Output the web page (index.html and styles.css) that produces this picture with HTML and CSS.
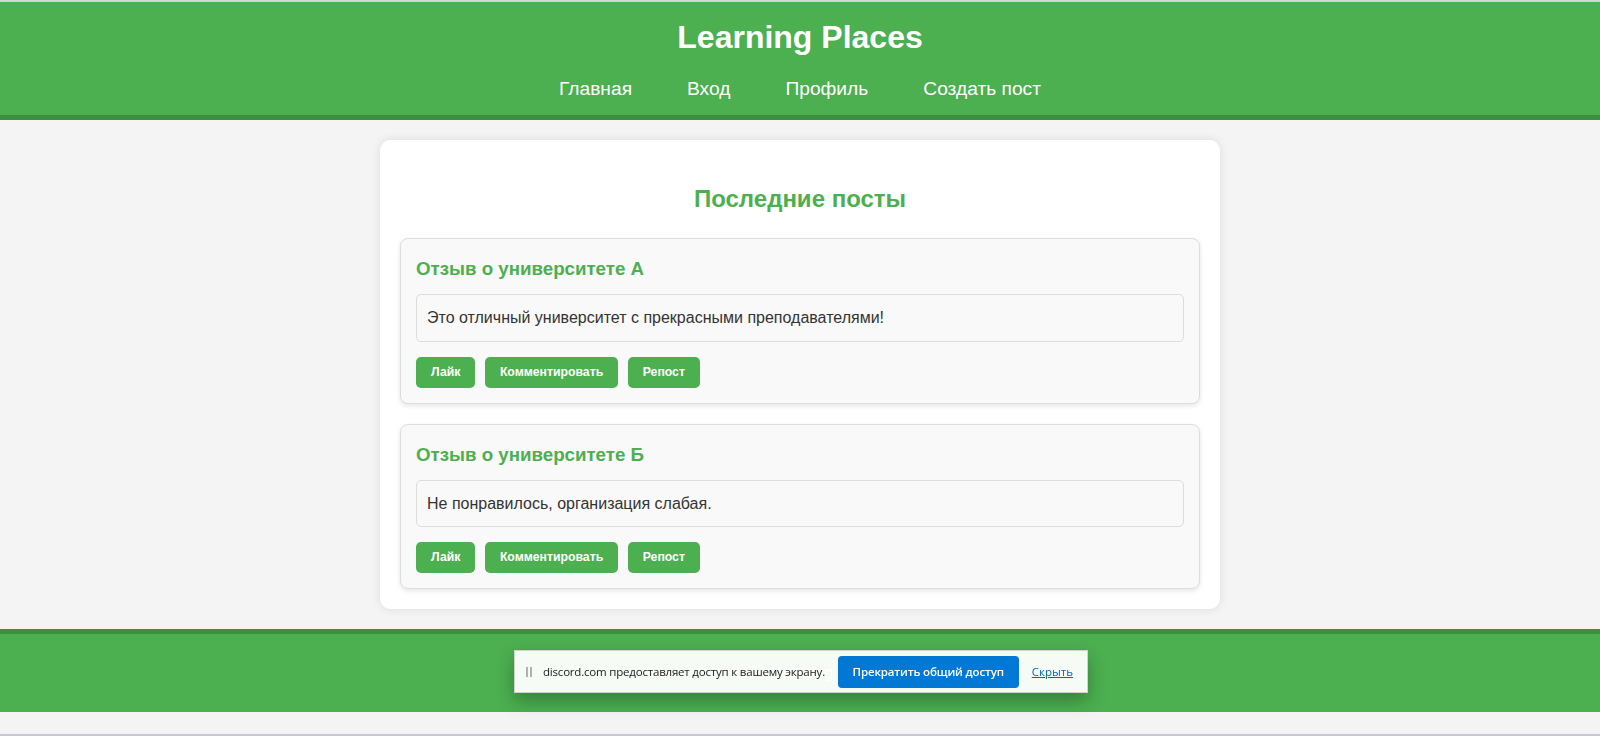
FILE: index.html
```html
<!DOCTYPE html>
<html lang="ru">
<head>
<meta charset="utf-8">
<title>Learning Places</title>
<link rel="stylesheet" href="styles.css">
</head>
<body>
<div class="top-edge"></div>
<header class="site-header">
  <h1 class="site-title">Learning Places</h1>
  <nav class="site-nav">
    <a href="#">Главная</a>
    <a href="#">Вход</a>
    <a href="#">Профиль</a>
    <a href="#">Создать пост</a>
  </nav>
</header>
<main class="container">
  <h2 class="section-title">Последние посты</h2>
  <div class="posts">
    <div class="post">
      <h3 class="post-title">Отзыв о университете А</h3>
      <div class="post-content">Это отличный университет с прекрасными преподавателями!</div>
      <div class="post-actions">
        <button class="btn">Лайк</button>
        <button class="btn">Комментировать</button>
        <button class="btn">Репост</button>
      </div>
    </div>
    <div class="post">
      <h3 class="post-title">Отзыв о университете Б</h3>
      <div class="post-content">Не понравилось, организация слабая.</div>
      <div class="post-actions">
        <button class="btn">Лайк</button>
        <button class="btn">Комментировать</button>
        <button class="btn">Репост</button>
      </div>
    </div>
  </div>
</main>
<footer class="site-footer">
  <p>© 2024 Learning Places</p>
</footer>
<div class="bottom-edge"></div>

<div class="share-bar">
  <span class="grip"><i></i><i></i></span>
  <span class="share-text">discord.com предоставляет доступ к вашему экрану.</span>
  <button class="share-stop">Прекратить общий доступ</button>
  <a class="share-hide" href="#">Скрыть</a>
</div>
</body>
</html>
```

FILE: styles.css
```css
html, body {
  margin: 0;
  padding: 0;
}
body {
  font-family: "Liberation Sans", Arial, sans-serif;
  font-size: 16px;
  line-height: 1.6;
  background: #f4f4f4;
  color: #333;
}
.top-edge {
  height: 2px;
  background: #d4d4d4;
}
.site-header {
  background: #4caf50;
  color: #fff;
  text-align: center;
  padding: 10px 0;
  border-bottom: 5px solid #3e8e41;
}
.site-title {
  margin: 0 0 10px;
  font-size: 32px;
  font-weight: bold;
  line-height: 1.6;
}
.site-nav {
  display: flex;
  justify-content: center;
  gap: 55px;
  font-size: 19.2px;
  line-height: 32px;
}
.site-nav a {
  color: #fff;
  text-decoration: none;
}
.container {
  width: 800px;
  margin: 20px auto;
  padding: 20px;
  background: #fff;
  border-radius: 10px;
  box-shadow: 0 0 10px rgba(0, 0, 0, 0.1);
}
.section-title {
  margin: 19.92px 0;
  font-size: 24px;
  text-align: center;
  color: #4caf50;
}
.posts {
  display: flex;
  flex-direction: column;
  gap: 20px;
}
.post {
  background: #f9f9f9;
  border: 1px solid #ddd;
  border-radius: 8px;
  padding: 15px;
  box-shadow: 0 2px 5px rgba(0, 0, 0, 0.1);
}
.post-title {
  margin: 0 0 10px;
  font-size: 18.72px;
  color: #4caf50;
}
.post-content {
  background: #f9f9f9;
  border: 1px solid #ddd;
  border-radius: 5px;
  padding: 10px;
  margin-bottom: 15px;
  color: #333;
}
.post-actions {
  display: flex;
  gap: 9.5px;
}
.btn {
  font-family: "Liberation Sans", Arial, sans-serif;
  font-size: 12.25px;
  font-weight: bold;
  line-height: 15px;
  color: #fff;
  background: #4caf50;
  border: none;
  border-radius: 5px;
  padding: 8px 15px;
  cursor: pointer;
}
.site-footer {
  background: #4caf50;
  color: #fff;
  text-align: center;
  padding: 10px 0;
  border-top: 5px solid #3e8e41;
}
.site-footer p {
  margin: 16px 0;
}
.bottom-edge {
  margin-top: 22px;
  height: 2px;
  background: #c3cad6;
}
.share-bar {
  position: fixed;
  left: 514px;
  top: 650px;
  width: 574px;
  height: 43px;
  box-sizing: border-box;
  display: flex;
  align-items: center;
  padding: 0 14px 0 11px;
  background: rgba(255, 255, 255, 0.95);
  border: 1px solid #cfd3d1;
  box-shadow: 0 8px 18px rgba(0, 0, 0, 0.28);
  font-family: "Open Sans", "Noto Sans", sans-serif;
  font-size: 11.5px;
  line-height: 1;
}
.grip {
  display: flex;
  gap: 2px;
  margin-right: 11px;
}
.grip i {
  display: block;
  width: 2px;
  height: 10px;
  background: #b0b0b0;
}
.share-text {
  color: #1a1a1a;
  white-space: nowrap;
  letter-spacing: -0.2px;
}
.share-stop {
  margin-left: auto;
  width: 181px;
  height: 32px;
  border: none;
  border-radius: 4px;
  background: #0078d4;
  color: #fff;
  font-family: "Open Sans", "Noto Sans", sans-serif;
  font-size: 11.5px;
  font-weight: 600;
  letter-spacing: -0.15px;
  padding: 0;
}
.share-hide {
  margin-left: 13px;
  color: #0067c0;
  text-decoration: underline;
  white-space: nowrap;
}
```
